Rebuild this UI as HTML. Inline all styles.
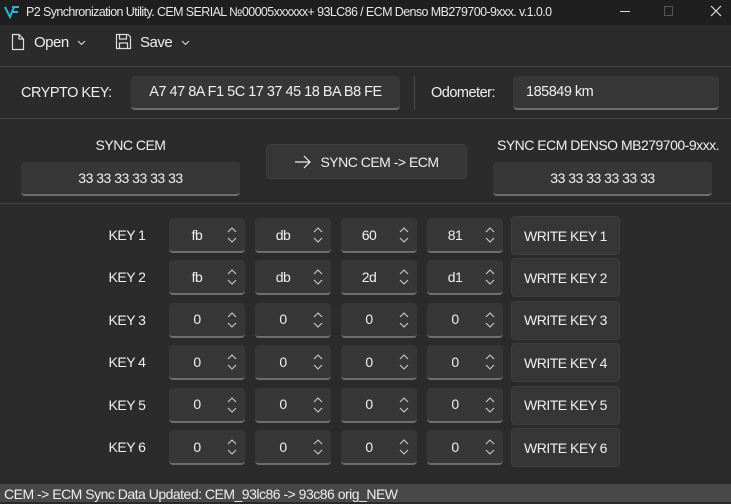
<!DOCTYPE html><html><head><style>
*{box-sizing:border-box;margin:0;padding:0}
body{width:731px;height:502px;background:#2b2b2b;color:#f0f0f0;font-family:"Liberation Sans",sans-serif;font-size:14px;letter-spacing:-0.5px;position:relative;overflow:hidden}
.a{position:absolute}
.box{position:absolute;background:#373737;border-radius:4px;border-bottom:2px solid #6e6e6e;display:flex;align-items:center;justify-content:center}
.btn{position:absolute;background:#363636;border:1px solid #3e3e3e;border-radius:4px;display:flex;align-items:center;justify-content:center}
.hl{position:absolute;left:0;width:731px;height:1px;background:#454545}
.lbl{position:absolute;width:100px;text-align:center}
.sp{position:absolute;right:8px;top:8px;width:10px;height:18px}
</style></head><body>
<div class="a" style="left:0;top:0;width:731px;height:25px;background:#1f1f1f"></div>
<svg class="a" style="left:4px;top:5px" width="16" height="14"><path d="M1 2 L6 12 L10 2 M8 2 H15 M9 7 H14" stroke="#2fb3d9" stroke-width="2" fill="none"/></svg>
<div class="a" style="left:26px;top:5px;font-size:12.5px;letter-spacing:-0.6px;color:#e8e8e8;white-space:nowrap">P2 Synchronization Utility. CEM SERIAL №00005xxxxxx+ 93LC86 / ECM Denso MB279700-9xxx. v.1.0.0</div>
<div class="a" style="left:620px;top:11px;width:10px;height:1px;background:#ddd"></div>
<div class="a" style="left:664px;top:6px;width:9px;height:10px;border:1px solid #555"></div>
<svg class="a" style="left:710px;top:5px" width="12" height="12"><path d="M1 1 L11 11 M11 1 L1 11" stroke="#ddd" stroke-width="1.2"/></svg>
<svg class="a" style="left:11px;top:33px" width="14" height="18"><path d="M1.5 1.5 H8 L12.5 6 V16.5 H1.5 Z M8 1.5 V6 H12.5" stroke="#ddd" stroke-width="1.2" fill="none"/></svg>
<div class="a" style="left:34px;top:34px;font-size:15px">Open</div>
<svg class="a" style="left:77px;top:40px" width="9" height="6"><path d="M1 1 L4.5 4.5 L8 1" stroke="#ddd" stroke-width="1.1" fill="none"/></svg>
<svg class="a" style="left:115px;top:33px" width="17" height="17"><path d="M1.5 1.5 H13 L15.5 4 V15.5 H1.5 Z M4.5 1.5 V6 H11.5 V1.5 M4.5 15.5 V10 H12.5 V15.5" stroke="#ddd" stroke-width="1.2" fill="none"/></svg>
<div class="a" style="left:140px;top:34px;font-size:15px">Save</div>
<svg class="a" style="left:181px;top:40px" width="9" height="6"><path d="M1 1 L4.5 4.5 L8 1" stroke="#ddd" stroke-width="1.1" fill="none"/></svg>
<div class="hl" style="top:66px"></div>
<div class="a" style="left:21px;top:85px;font-size:14.5px">CRYPTO KEY:</div>
<div class="box" style="left:131px;top:76px;width:269px;height:34px;font-size:14.5px">A7 47 8A F1 5C 17 37 45 18 BA B8 FE</div>
<div class="a" style="left:414px;top:76px;width:1px;height:34px;background:#4a4a4a"></div>
<div class="a" style="left:431px;top:85px;font-size:14.5px">Odometer:</div>
<div class="box" style="left:513px;top:76px;width:206px;height:34px;justify-content:flex-start;padding-left:13px;font-size:14.5px">185849 km</div>
<div class="hl" style="top:118px"></div>
<div class="a" style="left:21px;top:137px;width:219px;text-align:center">SYNC CEM</div>
<div class="box" style="left:21px;top:162px;width:219px;height:34px">33 33 33 33 33 33</div>
<div class="btn" style="left:266px;top:144px;width:201px;height:35px"><svg width="18" height="14" style="margin-right:8px"><path d="M1 7 H16 M10 1 L16 7 L10 13" stroke="#eee" stroke-width="1.2" fill="none"/></svg>SYNC CEM -&gt; ECM</div>
<div class="a" style="left:488px;top:137px;width:240px;text-align:center">SYNC ECM DENSO MB279700-9xxx.</div>
<div class="box" style="left:493px;top:162px;width:219px;height:34px">33 33 33 33 33 33</div>
<div class="hl" style="top:203px"></div>
<div id="rows"></div>
<div class="a" style="left:0;top:484px;width:731px;height:18px;background:#484848;color:#eee;font-size:14px;padding-left:4px;line-height:20px">CEM -&gt; ECM Sync Data Updated: CEM_93lc86 -&gt; 93c86 orig_NEW</div>
<script>
var d=[["fb","db","60","81"],["fb","db","2d","d1"],["0","0","0","0"],["0","0","0","0"],["0","0","0","0"],["0","0","0","0"]];
var xs=[169,255,341,427],h="";
d.forEach(function(r,i){var cy=236+i*42.4;
h+='<div class="lbl" style="left:77px;top:'+(cy-9)+'px">KEY '+(i+1)+'</div>';
r.forEach(function(v,j){h+='<div class="box" style="left:'+xs[j]+'px;top:'+(cy-18)+'px;width:76px;height:35px;justify-content:flex-start"><span style="position:absolute;left:0;width:56px;text-align:center">'+v+'</span><svg class="sp" viewBox="0 0 10 18"><path d="M1 6 L5 2 L9 6 M1 12 L5 16 L9 12" stroke="#ccc" stroke-width="1.1" fill="none"/></svg></div>';});
h+='<div class="btn" style="left:511px;top:'+(cy-20)+'px;width:109px;height:39px">WRITE KEY '+(i+1)+'</div>';});
document.getElementById("rows").innerHTML=h;
</script>
</body></html>
